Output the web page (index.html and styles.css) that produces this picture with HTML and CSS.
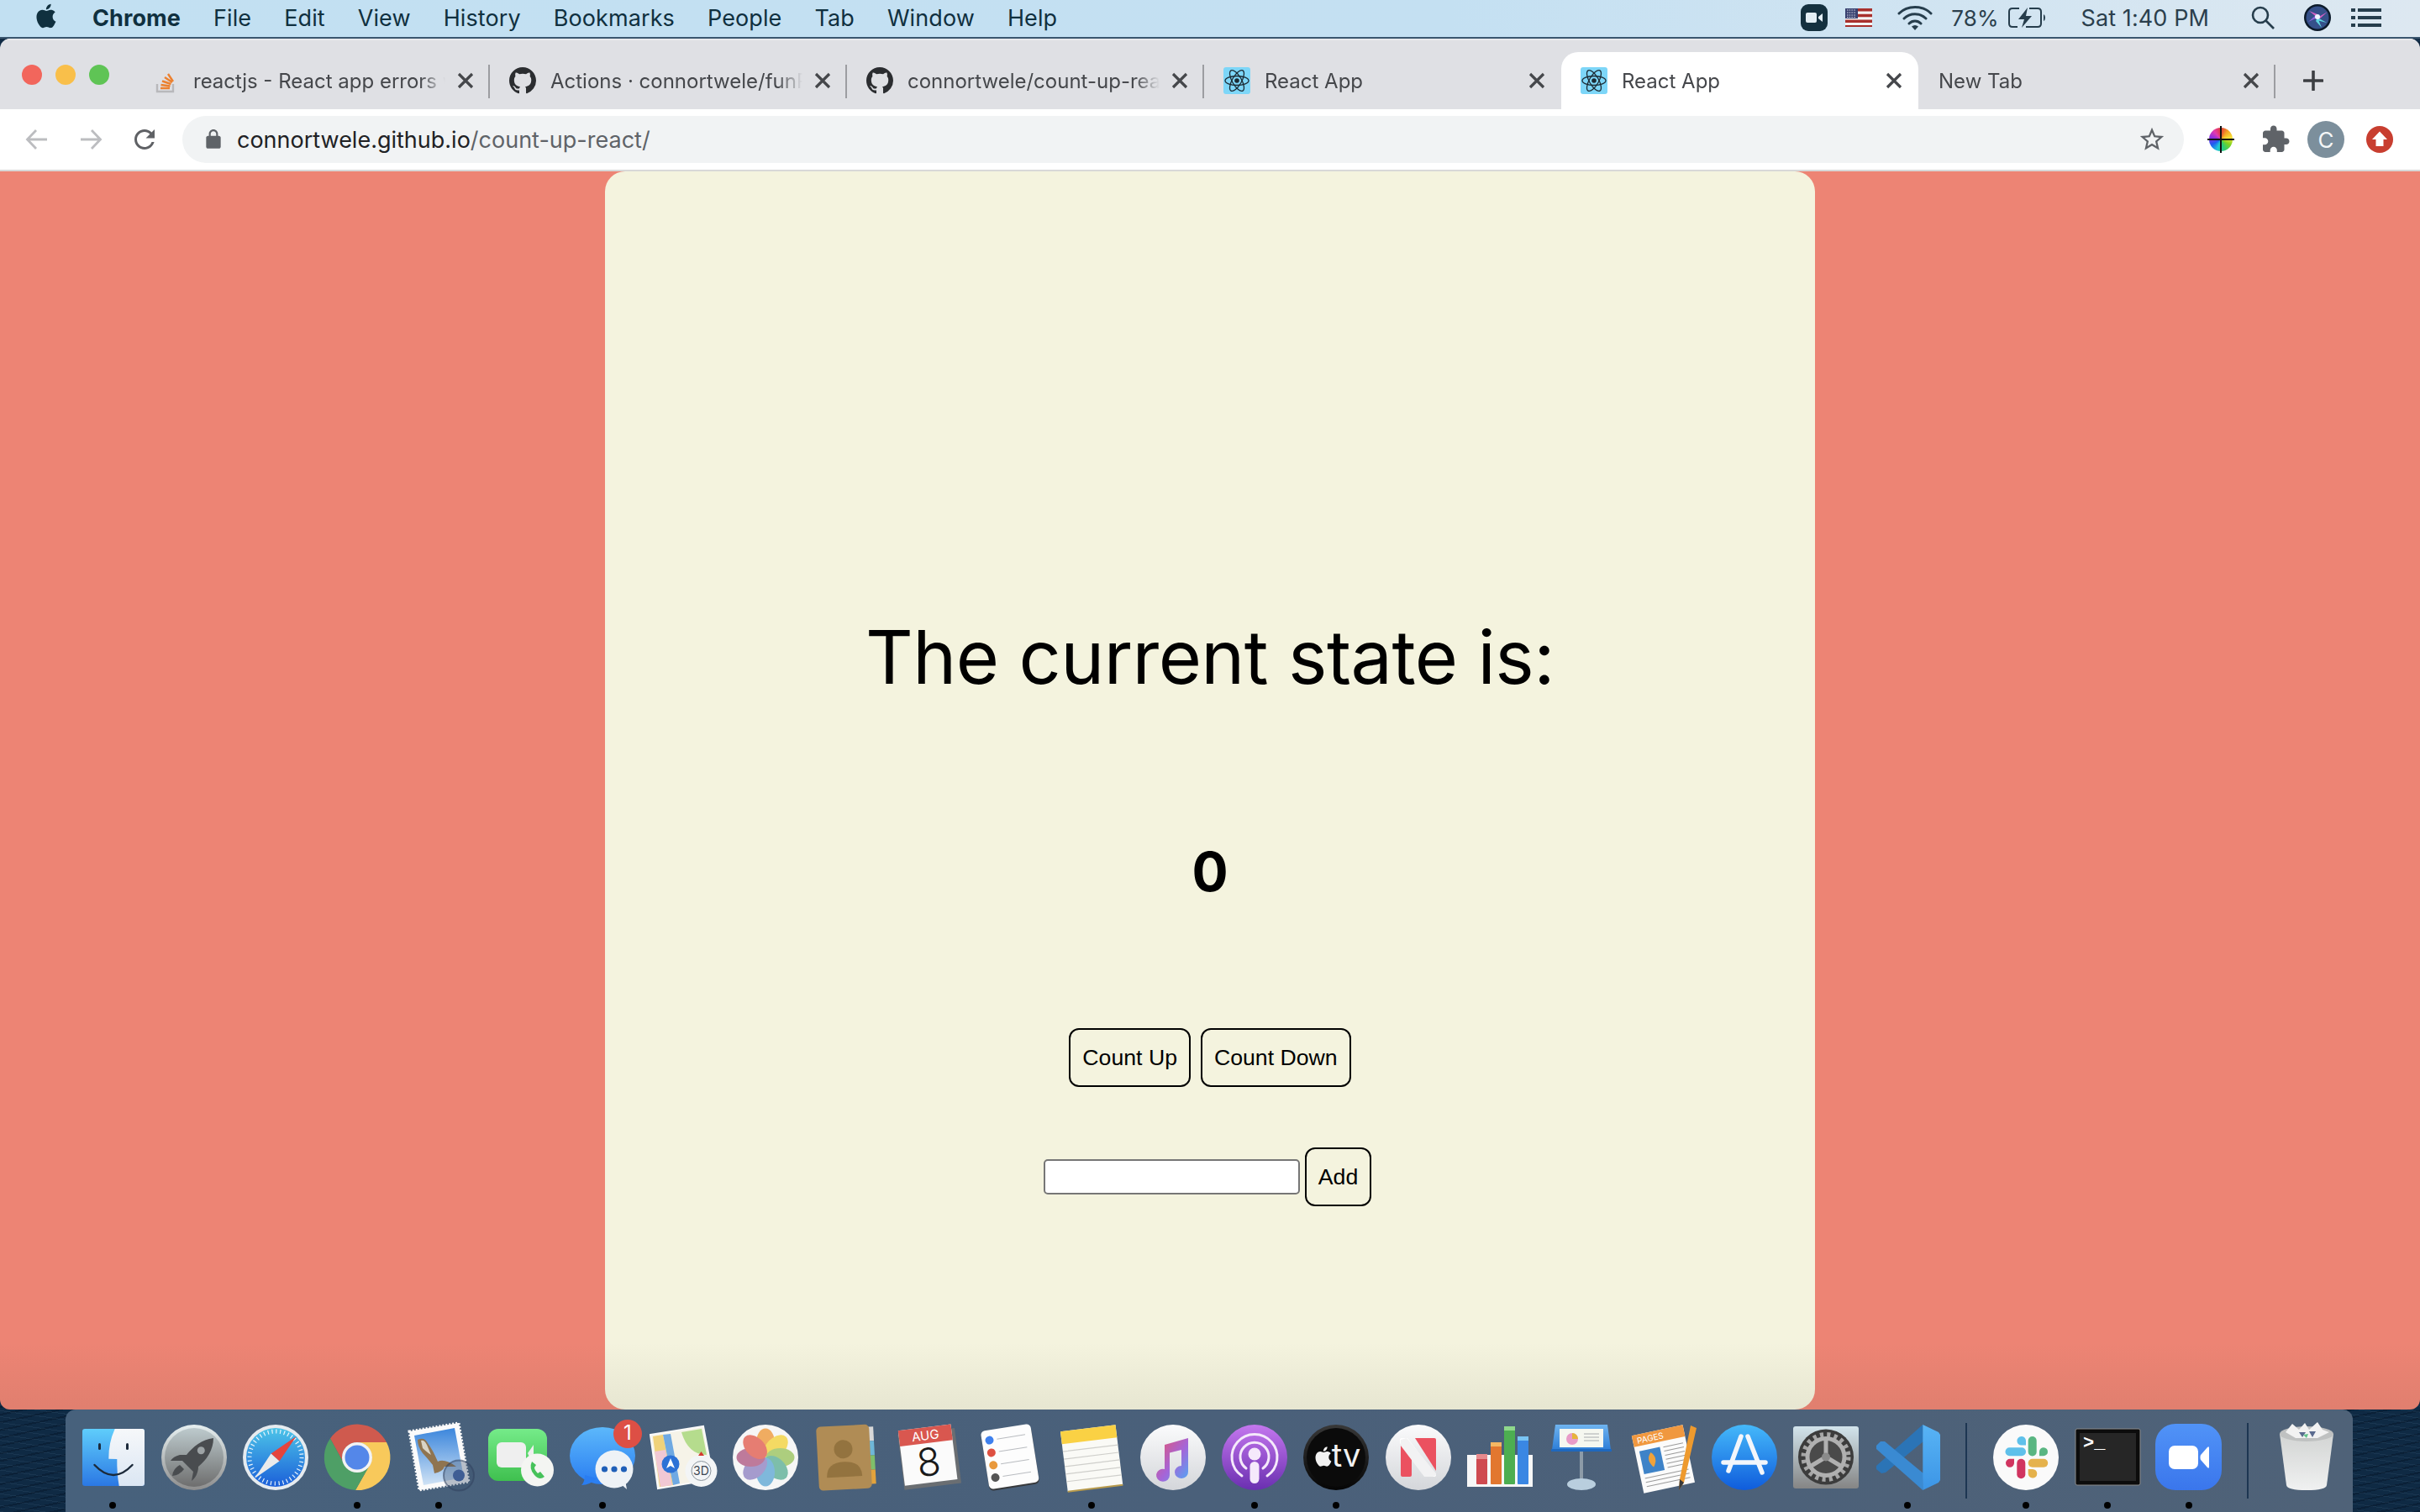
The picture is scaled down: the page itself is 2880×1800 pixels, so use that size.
FILE: index.html
```html
<!DOCTYPE html>
<html lang="en">
<head>
<meta charset="utf-8">
<title>React App</title>
<link rel="stylesheet" href="styles.css">
</head>
<body>
<svg class="defs" aria-hidden="true">
  <defs>
    <linearGradient id="gFinderL" x1="0" y1="0" x2="0" y2="1"><stop offset="0" stop-color="#5fcdfb"/><stop offset="1" stop-color="#2b78e4"/></linearGradient>
    <linearGradient id="gFinderR" x1="0" y1="0" x2="0" y2="1"><stop offset="0" stop-color="#f6f8fa"/><stop offset="1" stop-color="#dbe6f3"/></linearGradient>
    <linearGradient id="gRocketRing" x1="0" y1="0" x2="0" y2="1"><stop offset="0" stop-color="#e6eff0"/><stop offset="1" stop-color="#8d8d8d"/></linearGradient>
    <linearGradient id="gRocket" x1="0" y1="0" x2="0" y2="1"><stop offset="0" stop-color="#bdcacd"/><stop offset="1" stop-color="#6e6e6e"/></linearGradient>
    <linearGradient id="gSafari" x1="0" y1="0" x2="0" y2="1"><stop offset="0" stop-color="#4cc4e8"/><stop offset="1" stop-color="#1b5fd9"/></linearGradient>
    <linearGradient id="gSky" x1="0" y1="0" x2="0" y2="1"><stop offset="0" stop-color="#3b86dc"/><stop offset="1" stop-color="#cfe2f5"/></linearGradient>
    <linearGradient id="gFace" x1="0" y1="0" x2="0" y2="1"><stop offset="0" stop-color="#75eb89"/><stop offset="1" stop-color="#3fc04f"/></linearGradient>
    <linearGradient id="gMsg" x1="0" y1="0" x2="0" y2="1"><stop offset="0" stop-color="#5cb8fb"/><stop offset="1" stop-color="#2a7df1"/></linearGradient>
    <linearGradient id="gLight" x1="0" y1="0" x2="0" y2="1"><stop offset="0" stop-color="#fbfbfc"/><stop offset="1" stop-color="#d4d6da"/></linearGradient>
    <linearGradient id="gMusic" x1="0" y1="0" x2="1" y2="1"><stop offset="0" stop-color="#e8546c"/><stop offset=".55" stop-color="#a565d8"/><stop offset="1" stop-color="#4fa8f5"/></linearGradient>
    <linearGradient id="gPod" x1="0" y1="0" x2="0" y2="1"><stop offset="0" stop-color="#c477ee"/><stop offset="1" stop-color="#6a2fb0"/></linearGradient>
    <linearGradient id="gTv" x1="0" y1="0" x2="0" y2="1"><stop offset="0" stop-color="#383838"/><stop offset="1" stop-color="#050505"/></linearGradient>
    <linearGradient id="gApp" x1="0" y1="0" x2="0" y2="1"><stop offset="0" stop-color="#45b9fa"/><stop offset="1" stop-color="#0f5cdc"/></linearGradient>
    <linearGradient id="gPrefs" x1="0" y1="0" x2="0" y2="1"><stop offset="0" stop-color="#d2e4ec"/><stop offset="1" stop-color="#858585"/></linearGradient>
    <linearGradient id="gCode" x1="0" y1="0" x2="0" y2="1"><stop offset="0" stop-color="#58b4f5"/><stop offset="1" stop-color="#3c95e6"/></linearGradient>
    <linearGradient id="gZoom" x1="0" y1="0" x2="0" y2="1"><stop offset="0" stop-color="#5193f7"/><stop offset="1" stop-color="#3a76ec"/></linearGradient>
    <linearGradient id="gTrash" x1="0" y1="0" x2="0" y2="1"><stop offset="0" stop-color="#d2d4d3"/><stop offset="1" stop-color="#f0f1f1"/></linearGradient>
    <linearGradient id="gKey" x1="0" y1="0" x2="0" y2="1"><stop offset="0" stop-color="#6fb4f0"/><stop offset="1" stop-color="#2d7ed8"/></linearGradient>
    <symbol id="octo" viewBox="0 0 16 16"><path d="M8 0C3.58 0 0 3.58 0 8c0 3.54 2.29 6.53 5.47 7.59.4.07.55-.17.55-.38 0-.19-.01-.82-.01-1.49-2.01.37-2.53-.49-2.69-.94-.09-.23-.48-.94-.82-1.13-.28-.15-.68-.52-.01-.53.63-.01 1.08.58 1.23.82.72 1.21 1.87.87 2.33.66.07-.52.28-.87.51-1.07-1.78-.2-3.64-.89-3.64-3.95 0-.87.31-1.59.82-2.15-.08-.2-.36-1.02.08-2.12 0 0 .67-.21 2.2.82.64-.18 1.32-.27 2-.27.68 0 1.36.09 2 .27 1.53-1.04 2.2-.82 2.2-.82.44 1.1.16 1.92.08 2.12.51.56.82 1.27.82 2.15 0 3.07-1.87 3.75-3.65 3.95.29.25.54.73.54 1.48 0 1.07-.01 1.93-.01 2.2 0 .21.15.46.55.38A8.013 8.013 0 0016 8c0-4.42-3.58-8-8-8z" fill="#2b2d30"/></symbol>
    <symbol id="atom" viewBox="0 0 32 32"><rect width="32" height="32" rx="3" fill="#7dd6f8"/><g fill="none" stroke="#1c2a33" stroke-width="1.3"><ellipse cx="16" cy="16" rx="14" ry="5.5"/><ellipse cx="16" cy="16" rx="14" ry="5.5" transform="rotate(60 16 16)"/><ellipse cx="16" cy="16" rx="14" ry="5.5" transform="rotate(120 16 16)"/></g><circle cx="16" cy="16" r="2.8" fill="#1c2a33"/></symbol>
    <symbol id="cross" viewBox="0 0 24 24"><path d="M4 4L20 20M20 4L4 20" stroke="#45474b" stroke-width="3.2" fill="none"/></symbol>
    <symbol id="applelogo" viewBox="0 0 24 24"><path d="M18.71 19.5c-.83 1.24-1.71 2.45-3.05 2.47-1.34.03-1.77-.79-3.29-.79-1.53 0-2 .77-3.27.82-1.31.05-2.3-1.32-3.14-2.53C4.25 17 2.94 12.45 4.7 9.39c.87-1.52 2.43-2.48 4.12-2.51 1.28-.02 2.5.87 3.29.87.78 0 2.26-1.07 3.8-.91.65.03 2.47.26 3.64 1.98-.09.06-2.17 1.28-2.15 3.81.03 3.02 2.65 4.03 2.68 4.04-.03.07-.42 1.44-1.38 2.83M13 3.5c.73-.83 1.94-1.46 2.94-1.5.13 1.17-.34 2.35-1.04 3.19-.69.85-1.83 1.51-2.95 1.42-.15-1.15.41-2.35 1.05-3.11z"/></symbol>
  </defs>
</svg>

<div class="desktop">
  <header class="menubar">
    <nav class="menu-left">
      <svg class="apple-icon" viewBox="0 0 24 24"><use href="#applelogo"/></svg>
      <span class="menu-app">Chrome</span>
      <span>File</span><span>Edit</span><span>View</span><span>History</span><span>Bookmarks</span><span>People</span><span>Tab</span><span>Window</span><span>Help</span>
    </nav>
    <div class="menu-right">
      <svg class="st-zoom" viewBox="0 0 32 32"><rect y="0" width="32" height="32" rx="9" fill="#14303f"/><rect x="6" y="10" width="13" height="12" rx="2" fill="#e3eef5"/><path d="M21 15l5-4v10l-5-4z" fill="#e3eef5"/></svg>
      <svg class="st-flag" viewBox="0 0 32 22"><rect width="32" height="22" fill="#f4f4f4"/><path d="M0 0h32v3.4H0zM0 6.8h32v3.4H0zM0 13.6h32V17H0zM0 20h32v2H0z" fill="#a8302d"/><rect width="15" height="12" fill="#38406f"/><path d="M2 2h11M2 5h11M2 8h11M2 10.5h11" stroke="#dfe3ee" stroke-width="1" stroke-dasharray="1.5 1.2"/></svg>
      <svg class="st-wifi" viewBox="0 0 42 32"><g fill="none" stroke="#263d4c" stroke-width="3" stroke-linecap="round"><path d="M2 11C12 1 30 1 40 11"/><path d="M8 17C15 10 27 10 34 17"/><path d="M14 23C18 19 24 19 28 23"/></g><path d="M17 26.500Q21 23.500 25 26.500L21 31z" fill="#263d4c"/></svg>
      <span class="st-pct">78%</span>
      <svg class="st-batt" viewBox="0 0 46 26"><path d="M14 2H6Q2 2 2 6V20Q2 24 6 24H12M26 2H36Q40 2 40 6V20Q40 24 36 24H22" fill="none" stroke="#263d4c" stroke-width="2"/><path d="M43 9Q45 10 45 13Q45 16 43 17z" fill="#263d4c"/><path d="M24 1L13 15H20L17 25L29 11H22z" fill="#263d4c"/></svg>
      <span class="st-time">Sat 1:40 PM</span>
      <svg class="st-search" viewBox="0 0 28 28"><circle cx="11" cy="11" r="9" fill="none" stroke="#263d4c" stroke-width="2.600"/><path d="M17.500 17.500L27 27" stroke="#263d4c" stroke-width="2.600"/></svg>
      <svg class="st-siri" viewBox="0 0 32 32"><circle cx="16" cy="16" r="16" fill="#0c1a2a"/><circle cx="16" cy="16" r="13.500" fill="#35508a"/><path d="M16 16L6 8L16 12zM16 16L28 9L19 17z" fill="#d35fc3"/><path d="M16 16L27 22L15 19zM16 16L21 28L14 20z" fill="#5fd6e0"/><path d="M16 16L5 21L13 14z" fill="#8f62d8"/><circle cx="16" cy="15" r="3" fill="#eef6ff"/></svg>
      <svg class="st-list" viewBox="0 0 36 24"><g fill="#263d4c"><rect y="1" width="5" height="4"/><rect y="10" width="5" height="4"/><rect y="19" width="5" height="4"/><rect x="8" y="1" width="28" height="4"/><rect x="8" y="10" width="28" height="4"/><rect x="8" y="19" width="28" height="4"/></g></svg>
    </div>
  </header>

  <main class="window">
    <div class="tabstrip">
      <div class="lights"><i class="light light-red"></i><i class="light light-yellow"></i><i class="light light-green"></i></div>
      <div class="tab">
        <svg class="favicon" viewBox="0 0 32 32"><path d="M6 20v9h19v-9" fill="none" stroke="#b8b8bb" stroke-width="2.400"/><path d="M10 25h11M10.500 21l11 1.500M12 16.500l10.500 3.500M15 12l9 6M19 8l6 9" stroke="#ec8130" stroke-width="2.400" fill="none"/></svg>
        <span class="tab-title">reactjs - React app errors when deploying</span>
        <svg class="tab-close"><use href="#cross"/></svg>
      </div>
      <div class="tab">
        <svg class="favicon"><use href="#octo"/></svg>
        <span class="tab-title">Actions · connortwele/funReact</span>
        <svg class="tab-close"><use href="#cross"/></svg>
      </div>
      <div class="tab">
        <svg class="favicon"><use href="#octo"/></svg>
        <span class="tab-title">connortwele/count-up-react</span>
        <svg class="tab-close"><use href="#cross"/></svg>
      </div>
      <div class="tab tab-nosep">
        <svg class="favicon"><use href="#atom"/></svg>
        <span class="tab-title">React App</span>
        <svg class="tab-close"><use href="#cross"/></svg>
      </div>
      <div class="tab tab-active">
        <svg class="favicon"><use href="#atom"/></svg>
        <span class="tab-title">React App</span>
        <svg class="tab-close"><use href="#cross"/></svg>
      </div>
      <div class="tab tab-blank">
        <span class="tab-title">New Tab</span>
        <svg class="tab-close"><use href="#cross"/></svg>
      </div>
      <svg class="tab-new" viewBox="0 0 24 24"><path d="M12 1V23M1 12H23" stroke="#3c3e42" stroke-width="3.600" stroke-linecap="round"/></svg>
    </div>

    <div class="toolbar">
      <svg class="tb-btn tb-arrow" viewBox="0 0 28 28"><path d="M26 14H3M13 3L2.500 14L13 25" fill="none" stroke="#bcbdc0" stroke-width="2.800"/></svg>
      <svg class="tb-btn tb-arrow tb-forward" viewBox="0 0 28 28"><path d="M2 14H25M15 3L25.500 14L15 25" fill="none" stroke="#bcbdc0" stroke-width="2.800"/></svg>
      <svg class="tb-reload" viewBox="0 0 24 24"><path d="M17.650 6.350C16.200 4.900 14.210 4 12 4c-4.420 0-7.990 3.580-7.990 8s3.570 8 7.990 8c3.730 0 6.840-2.550 7.730-6h-2.080c-.82 2.330-3.040 4-5.650 4-3.310 0-6-2.690-6-6s2.690-6 6-6c1.660 0 3.140.69 4.220 1.780L13 11h7V4l-2.350 2.350z" fill="#5f6165"/></svg>
      <div class="omnibox">
        <svg class="omni-lock" viewBox="0 0 24 24"><path d="M18 8h-1V6c0-2.760-2.240-5-5-5S7 3.240 7 6v2H6c-1.100 0-2 .9-2 2v10c0 1.100.9 2 2 2h12c1.100 0 2-.9 2-2V10c0-1.100-.9-2-2-2zM9 6c0-1.660 1.340-3 3-3s3 1.340 3 3v2H9V6z" fill="#5f6368"/></svg>
        <span class="omni-url"><b class="omni-host">connortwele.github.io</b>/count-up-react/</span>
        <svg class="omni-star" viewBox="0 0 24 24"><path d="M22 9.240l-7.190-.62L12 2 9.190 8.630 2 9.240l5.460 4.730L5.820 21 12 17.270 18.180 21l-1.630-7.030L22 9.240zM12 15.400l-3.760 2.270 1-4.280-3.320-2.880 4.380-.38L12 6.100l1.710 4.040 4.380.38-3.320 2.880 1 4.280L12 15.400z" fill="#5f6368"/></svg>
      </div>
      <div class="extensions">
        <span class="ext-wheel"></span>
        <svg class="ext-puzzle" viewBox="0 0 24 24"><path d="M20.500 11H19V7c0-1.100-.9-2-2-2h-4V3.500C13 2.120 11.880 1 10.500 1S8 2.120 8 3.500V5H4c-1.100 0-1.990.9-1.990 2v3.800H3.500c1.490 0 2.700 1.210 2.700 2.700s-1.210 2.700-2.700 2.700H2V20c0 1.100.9 2 2 2h3.800v-1.500c0-1.490 1.210-2.700 2.700-2.700 1.490 0 2.700 1.210 2.700 2.700V22H17c1.100 0 2-.9 2-2v-4h1.500c1.380 0 2.500-1.120 2.500-2.500S21.880 11 20.500 11z" fill="#5f6368"/></svg>
        <span class="ext-avatar">C</span>
        <svg class="ext-update" viewBox="0 0 32 32"><circle cx="16" cy="16" r="16" fill="#c83e30"/><path d="M16 6.500L25 16H20.500V24H11.500V16H7z" fill="#fff"/></svg>
      </div>
    </div>

    <section class="page">
      <div class="panel">
        <h1 class="state-title">The current state is:</h1>
        <h2 class="state-value">0</h2>
        <div class="count-row">
          <button class="btn" type="button">Count Up</button>
          <button class="btn" type="button">Count Down</button>
        </div>
        <div class="add-row">
          <input class="add-input" type="text">
          <button class="btn" type="button">Add</button>
        </div>
      </div>
    </section>
  </main>

  <footer class="dock">
    <!-- Finder -->
    <div class="dock-item"><svg class="dock-icon" viewBox="0 0 78 78"><rect x="3" y="5" width="74" height="68" rx="3" fill="url(#gFinderL)"/><path d="M41.700 5Q34 22 34.300 40.700L44.300 41Q44 58 46.700 73H74Q77 73 77 70V8Q77 5 74 5z" fill="url(#gFinderR)"/><rect x="22" y="22" width="3" height="8" rx="1.500" fill="#1c2a3a"/><rect x="55" y="22" width="3" height="8" rx="1.500" fill="#1c2a3a"/><path d="M17.500 48Q40 72 62.500 48" fill="none" stroke="#1c2a3a" stroke-width="2.400" stroke-linecap="round"/></svg><i class="dot"></i></div>
    <!-- Launchpad -->
    <div class="dock-item dock-nodot"><svg class="dock-icon" viewBox="0 0 78 78"><circle cx="39" cy="39" r="39" fill="url(#gRocketRing)"/><circle cx="39" cy="39" r="35" fill="url(#gRocket)"/><path d="M62 16C48 18 38 26 30 36L22 36Q14 38 11 43L25 43L38 56L36 67C40 64 44 58 44 50C54 42 62 30 62 16Z" fill="#494c4f"/><circle cx="47.300" cy="30.700" r="4.500" fill="#9da3a5"/><path d="M22 48Q14 52 13 61Q22 60 27 53Z" fill="#494c4f"/></svg><i class="dot"></i></div>
    <!-- Safari -->
    <div class="dock-item dock-nodot"><svg class="dock-icon" viewBox="0 0 78 78"><circle cx="39" cy="39" r="39" fill="#e6ebef"/><circle cx="39" cy="39" r="35" fill="url(#gSafari)"/><circle cx="39" cy="39" r="31" fill="none" stroke="#e8f3fb" stroke-width="5" stroke-dasharray="1.200 3.670"/><polygon points="63.500,14 33.500,34.500 43.500,43.500" fill="#e5443c"/><polygon points="14,64 33.500,34.500 43.500,43.500" fill="#ebebeb"/></svg><i class="dot"></i></div>
    <!-- Chrome -->
    <div class="dock-item"><svg class="dock-icon" viewBox="0 0 78 78"><path d="M7 16.500A39 39 0 0 1 74 21L39 21A18 18 0 0 0 22 44Z" fill="#cf5a4e"/><path d="M74 21A39 39 0 0 1 37 78L54 48A18 18 0 0 0 39 21Z" fill="#f8c95b"/><path d="M37 78A39 39 0 0 1 7 16.500L22 44A18 18 0 0 0 54 48Z" fill="#4e9f66"/><circle cx="39" cy="39" r="18" fill="#f3f3f3"/><circle cx="39" cy="39" r="14.500" fill="#5487e9"/></svg><i class="dot"></i></div>
    <!-- Mail -->
    <div class="dock-item"><svg class="dock-icon" viewBox="0 0 78 78"><polygon points="4,8 63,-2 75,68 16,78" fill="#fbfbfb" stroke="#fbfbfb" stroke-width="3" stroke-dasharray="2 2"/><polygon points="10,13 58,4 69,63 21,72" fill="url(#gSky)"/><path d="M14 18Q22 14 26 22Q32 30 38 44Q46 40 60 50L46 50Q44 56 34 58L32 48Q24 38 20 34Q14 26 14 18Z" fill="#8f7450"/><path d="M18 19Q22 18 25 24L30 36Q24 32 20 28z" fill="#d9d4c6"/><circle cx="63" cy="60.500" r="18" fill="rgba(60,80,110,.35)" stroke="rgba(50,65,95,.55)" stroke-width="2"/><circle cx="63" cy="60.500" r="7" fill="#3e5d94"/></svg><i class="dot"></i></div>
    <!-- FaceTime -->
    <div class="dock-item dock-nodot"><svg class="dock-icon" viewBox="0 0 78 78"><rect x="0" y="5" width="70" height="62" rx="12" fill="url(#gFace)"/><rect x="10" y="21" width="35" height="30" rx="6" fill="#efefef"/><path d="M47 34L54 24V50z" fill="#efefef"/><circle cx="58.500" cy="54" r="19.500" fill="#f4f5f2"/><path d="M52 44Q48 52 55 60Q61 67 67 62L62 56L59 58Q55 54 55 51L57 48z" fill="#46c25a"/></svg><i class="dot"></i></div>
    <!-- Messages -->
    <div class="dock-item"><svg class="dock-icon" viewBox="0 0 78 78"><ellipse cx="39" cy="37" rx="39" ry="34" fill="url(#gMsg)"/><path d="M18 60Q18 68 14 72Q24 72 32 64z" fill="#2a7df1"/><circle cx="53" cy="53" r="22.500" fill="#eef2f6"/><path d="M60 70L68 77L66 66z" fill="#eef2f6"/><circle cx="41.500" cy="53" r="3.600" fill="#1f5fb8"/><circle cx="53" cy="53" r="3.600" fill="#1f5fb8"/><circle cx="64.500" cy="53" r="3.600" fill="#1f5fb8"/><circle cx="69" cy="11" r="17" fill="#dd4f45"/><text class="badge-text" x="69" y="18">1</text></svg><i class="dot"></i></div>
    <!-- Maps -->
    <div class="dock-item dock-nodot"><svg class="dock-icon" viewBox="0 0 78 78"><polygon points="-1,12 62,2 74,65 8,76" fill="#f6f3e8" stroke="#fafafa" stroke-width="2"/><polygon points="2,14 14,12 26,72 10,74" fill="#f0d27a"/><polygon points="14,12 23,11 34,70 26,72" fill="#6fa9e2"/><path d="M36 9L60 5L66 36Q44 36 36 9Z" fill="#b5dc8d"/><polygon points="4,32 17,30 25,72 11,74" fill="#f1c8d4"/><circle cx="23" cy="47" r="10.500" fill="#2d72d6"/><path d="M23 40L28 52L23 49L18 52z" fill="#fff"/><circle cx="59.500" cy="55" r="19" fill="#f3f5f6"/><circle cx="59.500" cy="55" r="11.500" fill="none" stroke="#8a949c" stroke-width="1"/><text class="maps-text" x="59.500" y="60">3D</text><path d="M59.500 32L63 37H56z" fill="#d43a2f"/></svg><i class="dot"></i></div>
    <!-- Photos -->
    <div class="dock-item dock-nodot"><svg class="dock-icon" viewBox="0 0 78 78"><circle cx="39" cy="39" r="39" fill="#f6f6f6"/><g class="petals"><ellipse cx="39" cy="21.500" rx="11" ry="17" fill="#f0a24d" transform="rotate(0 39 39)"/><ellipse cx="39" cy="21.500" rx="11" ry="17" fill="#f4d74f" transform="rotate(45 39 39)"/><ellipse cx="39" cy="21.500" rx="11" ry="17" fill="#a4c96e" transform="rotate(90 39 39)"/><ellipse cx="39" cy="21.500" rx="11" ry="17" fill="#6db7a0" transform="rotate(135 39 39)"/><ellipse cx="39" cy="21.500" rx="11" ry="17" fill="#6fb0d8" transform="rotate(180 39 39)"/><ellipse cx="39" cy="21.500" rx="11" ry="17" fill="#9a8fc8" transform="rotate(225 39 39)"/><ellipse cx="39" cy="21.500" rx="11" ry="17" fill="#b7698f" transform="rotate(270 39 39)"/><ellipse cx="39" cy="21.500" rx="11" ry="17" fill="#e46d60" transform="rotate(315 39 39)"/></g></svg><i class="dot"></i></div>
    <!-- Contacts -->
    <div class="dock-item dock-nodot"><svg class="dock-icon" viewBox="0 0 78 78"><g transform="rotate(-3 39 39)"><rect x="58" y="4" width="14" height="17" fill="#d8d8d8"/><rect x="58" y="21" width="14" height="17" fill="#6fb7d8"/><rect x="58" y="38" width="14" height="17" fill="#7fbf6a"/><rect x="58" y="55" width="14" height="17" fill="#e2a33d"/><rect x="4" y="1" width="63" height="76" rx="5" fill="#b08c55"/><circle cx="35" cy="29" r="11" fill="#93733f"/><path d="M14 62Q14 44 35 44Q56 44 56 62z" fill="#93733f"/></g></svg><i class="dot"></i></div>
    <!-- Calendar -->
    <div class="dock-item dock-nodot"><svg class="dock-icon" viewBox="0 0 78 78"><g transform="rotate(-7 39 39)"><rect x="6" y="8" width="68" height="66" fill="#6a6e72"/><rect x="7" y="3" width="63" height="66" fill="#fbfbfb"/><rect x="7" y="3" width="63" height="19" fill="#d9574f"/><text class="cal-month" x="38.500" y="18">AUG</text><text class="cal-day" x="38.500" y="61">8</text></g></svg><i class="dot"></i></div>
    <!-- Reminders -->
    <div class="dock-item dock-nodot"><svg class="dock-icon" viewBox="0 0 78 78"><g transform="rotate(-9 39 39)"><rect x="9" y="5" width="60" height="70" rx="5" fill="#37393c"/><rect x="9" y="3" width="60" height="70" rx="5" fill="#fdfdfd"/><g stroke="#b9bcc0" stroke-width="1"><path d="M27 15H61M27 30H61M27 45H61M27 60H61"/></g><circle cx="18" cy="15" r="5" fill="#3e80ee"/><circle cx="18" cy="30" r="5" fill="#de5041"/><circle cx="18" cy="45" r="5" fill="#e9993c"/><circle cx="18" cy="60" r="5" fill="#555"/></g></svg><i class="dot"></i></div>
    <!-- Notes -->
    <div class="dock-item"><svg class="dock-icon" viewBox="0 0 78 78"><g transform="rotate(-7 39 39)"><rect x="6" y="4" width="66" height="72" fill="#fafaf6"/><rect x="6" y="4" width="66" height="15" fill="#fad144"/><path d="M6 28H72M6 37H72M6 46H72M6 55H72M6 64H72" stroke="#cfcfcb" stroke-width="1.200"/><rect x="6" y="75" width="66" height="2" fill="#b79a4c"/></g></svg><i class="dot"></i></div>
    <!-- Music -->
    <div class="dock-item dock-nodot"><svg class="dock-icon" viewBox="0 0 78 78"><circle cx="39" cy="39" r="39" fill="url(#gLight)"/><path d="M29 24L57 16V56A8 7.500 0 1 1 49 49V30L35 33.500V60A8 7.500 0 1 1 29 53z" fill="url(#gMusic)"/></svg><i class="dot"></i></div>
    <!-- Podcasts -->
    <div class="dock-item"><svg class="dock-icon" viewBox="0 0 78 78"><circle cx="39" cy="39" r="39" fill="url(#gPod)"/><g fill="none" stroke="#f5e9fb" stroke-width="3" stroke-linecap="round"><path d="M24 61A27 27 0 1 1 54 61"/><path d="M29 52A17 17 0 1 1 49 52"/></g><circle cx="39" cy="35" r="7.500" fill="#f5e9fb"/><rect x="33.500" y="44" width="11" height="26" rx="5.500" fill="#f5e9fb"/></svg><i class="dot"></i></div>
    <!-- TV -->
    <div class="dock-item"><svg class="dock-icon" viewBox="0 0 78 78"><circle cx="39" cy="39" r="39" fill="url(#gTv)"/><circle cx="39" cy="39" r="35" fill="#0b0b0b"/><svg x="10" y="24" width="28" height="28" viewBox="0 0 24 24"><use href="#applelogo" fill="#f2f2f2"/></svg><text class="tv-text" x="51" y="50">tv</text></svg><i class="dot"></i></div>
    <!-- News -->
    <div class="dock-item dock-nodot"><svg class="dock-icon" viewBox="0 0 78 78"><circle cx="39" cy="39" r="39" fill="url(#gLight)"/><path d="M17 18Q17 16 19 16H26L60 60Q60 62 58 62H50Q48 62 47 61L17 22z" fill="#fff"/><path d="M18 21V60Q18 62 20 62H29Q31 62 31 60V37z" fill="#eb5160"/><path d="M35 16H58Q60 16 60 18V55z" fill="#eb5160"/><path d="M18 18L25 16L60 58V60L56 62L46 62L18 25z" fill="#f2f2f3"/></svg><i class="dot"></i></div>
    <!-- Numbers -->
    <div class="dock-item dock-nodot"><svg class="dock-icon" viewBox="0 0 78 78"><rect x="0" y="36" width="78" height="38" fill="#f7f7f7"/><rect x="11" y="35" width="13" height="36" rx="1" fill="#cf4a50"/><rect x="11" y="35" width="13" height="6" fill="#e88a8d"/><rect x="28" y="21" width="13" height="50" rx="1" fill="#e2772f"/><rect x="28" y="21" width="13" height="5" fill="#f5b763"/><rect x="44" y="2" width="13" height="69" rx="1" fill="#4dae51"/><rect x="44" y="2" width="13" height="5" fill="#8fd88b"/><rect x="60" y="14" width="13" height="57" rx="1" fill="#3a87e3"/><rect x="60" y="14" width="13" height="5" fill="#79c4f4"/></svg><i class="dot"></i></div>
    <!-- Keynote -->
    <div class="dock-item dock-nodot"><svg class="dock-icon" viewBox="0 0 78 78"><path d="M8 0H70L74 30H4z" fill="url(#gKey)"/><rect x="3" y="29" width="72" height="3" fill="#1f68bd"/><rect x="13" y="5" width="52" height="22" fill="#f5f7f0"/><circle cx="28" cy="17" r="7" fill="#e89bc8"/><path d="M28 17V10A7 7 0 0 1 35 17z" fill="#e6b43a"/><path d="M42 11H60M42 15H60M42 19H60" stroke="#a8acb0" stroke-width="1"/><rect x="37" y="32" width="4" height="36" fill="#8d9ba8"/><ellipse cx="39" cy="71" rx="17" ry="7" fill="#b9cede"/></svg><i class="dot"></i></div>
    <!-- Pages -->
    <div class="dock-item dock-nodot"><svg class="dock-icon" viewBox="0 0 78 78"><g transform="rotate(-12 39 39)"><rect x="8" y="6" width="62" height="70" fill="#fbfbfb"/><rect x="8" y="6" width="62" height="14" fill="#f0983f"/><text class="pages-text" x="13" y="17">PAGES</text><rect x="13" y="26" width="25" height="28" fill="#3e83c8"/><path d="M26 30Q34 38 26 48Q18 38 26 30Z" fill="#f0a23a"/><path d="M42 27H66M42 32H66M42 37H66M42 42H66M42 47H66M42 52H66M13 59H66M13 64H66M13 69H66" stroke="#9b9b9b" stroke-width="1"/></g><path d="M72 1L79 4L64 69L58 78L59 65z" fill="#ee9a2e"/><path d="M64 69L58 78L59 65z" fill="#3a3a3a"/></svg><i class="dot"></i></div>
    <!-- App Store -->
    <div class="dock-item dock-nodot"><svg class="dock-icon" viewBox="0 0 78 78"><circle cx="39" cy="39" r="39" fill="url(#gApp)"/><g stroke="#f3f6fb" stroke-width="5.500" stroke-linecap="round"><path d="M43 14L60 57"/><path d="M35 14L20 55"/><path d="M14 45H64"/></g></svg><i class="dot"></i></div>
    <!-- System Preferences -->
    <div class="dock-item dock-nodot"><svg class="dock-icon" viewBox="0 0 78 78"><rect y="2" width="78" height="74" rx="3" fill="url(#gPrefs)"/><circle cx="39" cy="38.500" r="33" fill="#3c3c3c"/><circle cx="39" cy="38.500" r="26" fill="none" stroke="#a6a6a6" stroke-width="7" stroke-dasharray="4 4.200"/><circle cx="39" cy="38.500" r="22" fill="#4a4a4a" stroke="#b0b0b0" stroke-width="5"/><g stroke="#b0b0b0" stroke-width="5"><path d="M39 38.500V17M39 38.500L20 50M39 38.500L58 50"/></g><circle cx="39" cy="38.500" r="5" fill="#8a8a8a"/></svg><i class="dot"></i></div>
    <!-- VS Code -->
    <div class="dock-item"><svg class="dock-icon" viewBox="0 0 78 78"><polygon points="57.300,0 58,20 13,57 8,58 2,53 2,49" fill="#2b74b6"/><polygon points="7,20 2,25 2,29 57.300,78 58,58 12,20" fill="#3a8ad2"/><polygon points="57.300,0 76,9 78,12 78,66 76,69 57.300,78" fill="url(#gCode)"/></svg><i class="dot"></i></div>
    <div class="dock-sep"></div>
    <!-- Slack -->
    <div class="dock-item"><svg class="dock-icon" viewBox="0 0 78 78"><circle cx="39" cy="39" r="39" fill="#fafafa"/><rect x="14.500" y="27.300" width="24.500" height="10" rx="5" fill="#5fc0ea"/><path d="M39 24.500H34A5.300 5.300 0 1 1 39 19z" fill="#5fc0ea"/><rect x="41.700" y="14" width="10" height="23.500" rx="5" fill="#5ab682"/><path d="M55 37.300V32A5 5 0 1 1 60 37.300z" fill="#5ab682"/><rect x="28.300" y="40.700" width="10" height="23.500" rx="5" fill="#d13560"/><path d="M25 40.700V46A5 5 0 1 1 20 40.700z" fill="#d13560"/><rect x="41.700" y="40.700" width="23.500" height="10" rx="5" fill="#e5b24c"/><path d="M41.700 53H47A5.300 5.300 0 1 1 41.700 58z" fill="#e5b24c"/></svg><i class="dot"></i></div>
    <!-- Terminal -->
    <div class="dock-item"><svg class="dock-icon" viewBox="0 0 78 78"><rect x="1" y="5" width="77" height="67" rx="2" fill="#0c0c0c" stroke="#8a8a8a" stroke-width="1"/><rect x="6" y="10" width="67" height="57" fill="#262626"/><text class="term-text" x="10" y="28">&gt;_</text></svg><i class="dot"></i></div>
    <!-- Zoom -->
    <div class="dock-item"><svg class="dock-icon" viewBox="0 0 78 78"><rect x="-1" y="-1" width="79" height="79" rx="24" fill="url(#gZoom)"/><rect x="15" y="25" width="35" height="28" rx="7" fill="#fff"/><path d="M52.500 38Q52.500 36 54 35L61 27Q63 25 63 28V50Q63 53 61 51L54 43Q52.500 42 52.500 40z" fill="#fff"/></svg><i class="dot"></i></div>
    <div class="dock-sep"></div>
    <!-- Trash -->
    <div class="dock-item dock-nodot"><svg class="dock-icon" viewBox="0 0 78 78"><path d="M7 11L15 72Q16 78 39 78Q62 78 63 72L71 11z" fill="url(#gTrash)"/><ellipse cx="39" cy="11" rx="32" ry="9" fill="#bfc1c1"/><path d="M14 9L22 -1L30 6L37 -2L42 6L52 -3L58 6L66 9L52 16H26z" fill="#f2f2f2"/><path d="M30 9L34 15L38 9zM42 8L46 15L50 8z" fill="#5b6b8f"/><path d="M35 12L39 16L41 11z" fill="#5fc28a"/></svg><i class="dot"></i></div>
  </footer>
</div>
</body>
</html>
```

FILE: styles.css
```css
* { box-sizing: border-box; }
html, body { margin: 0; padding: 0; }
body { width: 2880px; height: 1800px; overflow: hidden; font-family: "Inter", "Liberation Sans", sans-serif; }
.defs { position: absolute; width: 0; height: 0; }

.desktop {
  width: 2880px; height: 1800px; display: flex; flex-direction: column; overflow: hidden;
  background-color: #0f2a44;
  background-image:
    repeating-linear-gradient(8deg, rgba(120,160,190,.1) 0 1px, transparent 1px 7px),
    repeating-linear-gradient(-12deg, rgba(0,10,25,.3) 0 2px, transparent 2px 9px);
}

/* macOS menu bar */
.menubar {
  height: 46px; flex: none; display: flex; justify-content: space-between; align-items: center;
  padding: 0 46px 2px 42px;
  background: linear-gradient(90deg, #c2e0f2 0%, #c4e0f2 60%, #dde8f1 100%);
  border-bottom: 2px solid #3a566f;
  font-size: 27px; color: #10303f; letter-spacing: .1px;
}
.menu-left { display: flex; align-items: center; gap: 39px; }
.apple-icon { width: 34px; height: 34px; fill: #10303f; margin: -4px -1px 0 -4px; }
.menu-app { font-weight: 700; margin-right: 0; }
.menu-right { display: flex; align-items: center; color: #2b3f4d; }
.st-zoom { width: 32px; height: 32px; }
.st-flag { width: 32px; height: 22px; margin-left: 21px; }
.st-wifi { width: 42px; height: 32px; margin-left: 30px; }
.st-pct { margin-left: 22px; font-size: 26px; }
.st-batt { width: 46px; height: 26px; margin-left: 10px; }
.st-time { margin-left: 42px; font-size: 27px; }
.st-search { width: 28px; height: 28px; margin-left: 50px; }
.st-siri { width: 32px; height: 32px; margin-left: 35px; }
.st-list { width: 36px; height: 24px; margin-left: 24px; }

/* Browser window */
.window {
  height: 1632px; flex: none; display: flex; flex-direction: column; overflow: hidden;
  border-radius: 12px;
}
.tabstrip {
  height: 84px; flex: none; display: flex; align-items: flex-end; position: relative;
  background: #dfe0e4; border-top: 2px solid #e9e9ec;
}
.lights { width: 158px; height: 68px; flex: none; display: flex; gap: 16px; padding: 15px 0 0 26px; }
.light { width: 24px; height: 24px; border-radius: 50%; display: block; }
.light-red { background: #f2665c; }
.light-yellow { background: #f9bf4a; }
.light-green { background: #5fc455; }

.tab {
  width: 425px; height: 68px; flex: none; display: flex; align-items: center; position: relative;
  padding: 0 17px 0 23px; font-size: 24px; color: #45474b;
}
.tab::after {
  content: ""; position: absolute; right: 0; top: 15px; width: 2px; height: 40px; background: #9c9da1;
}
.tab-nosep::after, .tab-active::after { display: none; }
.favicon { width: 32px; height: 32px; flex: none; margin-right: 17px; }
.tab-title {
  flex: 1; min-width: 0; overflow: hidden; white-space: nowrap;
  -webkit-mask-image: linear-gradient(90deg, #000 calc(100% - 34px), transparent calc(100% - 4px));
  mask-image: linear-gradient(90deg, #000 calc(100% - 34px), transparent calc(100% - 4px));
}
.tab-close { width: 24px; height: 24px; flex: none; margin-left: 8px; }
.tab-blank { padding-left: 24px; }
.tab-active { background: #fff; border-radius: 20px 20px 0 0; }
.tab-active::before, .tab-active .tab-title::before { content: none; }
.tab-new { width: 24px; height: 24px; flex: none; margin: 0 0 22px 33px; }

/* Toolbar */
.toolbar {
  height: 74px; flex: none; display: flex; align-items: center; background: #fff;
  border-bottom: 2px solid #d8d8d8; padding: 0 0 0 30px;
}
.tb-btn { width: 28px; height: 28px; flex: none; }
.tb-forward { margin-left: 36px; }
.tb-reload { width: 36px; height: 36px; flex: none; margin-left: 32px; }
.omnibox {
  width: 2382px; height: 56px; flex: none; margin-left: 27px; border-radius: 28px; background: #f1f3f4;
  display: flex; align-items: center; padding: 0 21px 0 24px; font-size: 27px; color: #5f6368;
}
.omni-lock { width: 26px; height: 26px; flex: none; margin-right: 15px; }
.omni-url { flex: 1; white-space: nowrap; }
.omni-host { font-weight: 400; color: #202124; }
.omni-star { width: 34px; height: 34px; flex: none; }
.extensions { display: flex; align-items: center; flex: none; }
.ext-wheel {
  width: 28px; height: 28px; border-radius: 50%; margin-left: 30px; position: relative; display: block;
  background: conic-gradient(#e23b3b, #f5a623, #f7e13a, #7ed321, #2ecc71, #21c7d9, #1e5cf0, #8a2be2, #e23bb0, #e23b3b);
}
.ext-wheel::before { content: ""; position: absolute; left: -2px; right: -2px; top: 13px; height: 2px; background: #111; }
.ext-wheel::after { content: ""; position: absolute; top: -2px; bottom: -2px; left: 13px; width: 2px; background: #111; }
.ext-puzzle { width: 36px; height: 36px; flex: none; margin-left: 33px; }
.ext-avatar {
  width: 44px; height: 44px; border-radius: 50%; margin-left: 20px; background: #7c8f9c; color: #f4f6f7;
  font-size: 26px; display: flex; align-items: center; justify-content: center; flex: none;
}
.ext-update { width: 32px; height: 32px; flex: none; margin-left: 26px; }

/* Page */
.page { flex: 1; min-height: 0; background: #ed8474; display: flex; justify-content: center; position: relative; }
.page::after {
  content: ""; position: absolute; left: 0; right: 0; bottom: 0; height: 80px;
  background: linear-gradient(180deg, rgba(60,60,40,0), rgba(60,60,40,.07));
}
.panel {
  width: 1440px; background: #f4f3de; border-radius: 24px; display: flex; flex-direction: column;
  align-items: center; padding-top: 525px; color: #000;
}
.state-title { margin: 0; font-size: 88px; line-height: 106px; font-weight: 400; letter-spacing: -.6px; }
.state-value { margin: 164px 0 0; font-size: 64px; line-height: 78px; font-weight: 700; }
.count-row { display: flex; align-items: center; margin-top: 147px; }
.add-row { display: flex; align-items: center; margin-top: 72px; }
.btn {
  height: 70px; margin: 0 6px; padding: 0 14px; background: transparent; border: 2px solid #000; border-radius: 12px;
  font-family: "Liberation Sans", Arial, sans-serif; font-size: 26.67px; color: #000;
}
.add-input { width: 305px; height: 42px; margin: 0; padding: 0; background: #fff; border: 2px solid #767676; border-radius: 5px; }

/* Dock */
.dock {
  height: 122px; flex: none; margin: 0 80px 0 78px; padding: 18px 0 0 7.500px; display: flex; align-items: flex-start;
  background: linear-gradient(90deg, #47617c, #4a607a 50%, #4f6278);
  border-radius: 12px 12px 0 0;
}
.dock-item { width: 97.100px; flex: none; display: flex; flex-direction: column; align-items: center; }
.dock-icon { width: 78px; height: 78px; overflow: visible; display: block; }
.dot { width: 8px; height: 8px; margin-top: 14px; border-radius: 50%; background: #000; display: block; }
.dock-nodot .dot { visibility: hidden; }
.dock-sep { width: 43.500px; flex: none; height: 90px; margin-top: -2px; display: flex; justify-content: center; position: relative; }
.dock-sep::before { content: ""; width: 2px; height: 100%; background: #1d3652; display: block; }

/* SVG text */
.badge-text { font: 400 24px "Inter", sans-serif; fill: #fff; text-anchor: middle; }
.maps-text { font: 400 14px "Inter", sans-serif; fill: #3c4650; text-anchor: middle; }
.cal-month { font: 400 15px "Inter", sans-serif; fill: #fff; text-anchor: middle; }
.cal-day { font: 300 46px "Inter", sans-serif; fill: #1a1a1a; text-anchor: middle; }
.tv-text { font: 400 38px "Inter", sans-serif; fill: #f2f2f2; text-anchor: middle; }
.pages-text { font: 400 10px "Inter", sans-serif; fill: #fff; }
.term-text { font: 700 22px "Liberation Mono", monospace; fill: #fff; }
.petals { opacity: .88; }
```
